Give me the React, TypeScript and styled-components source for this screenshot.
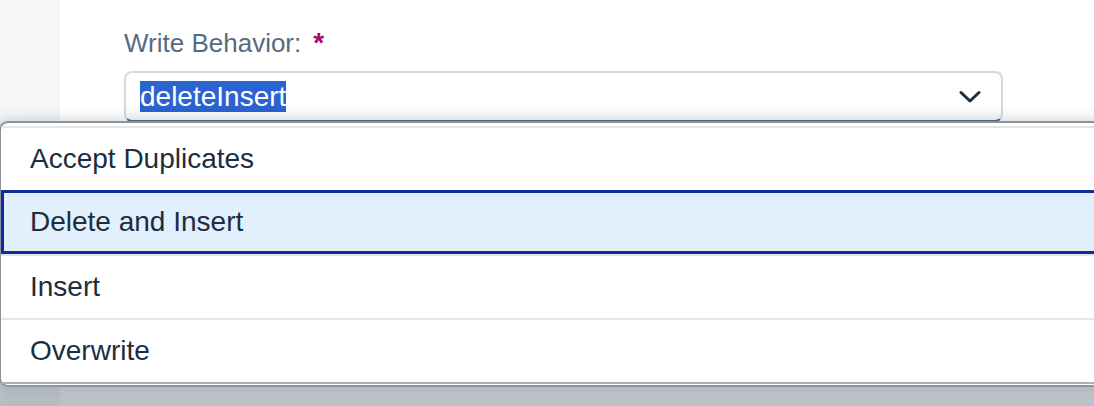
import React from "react";
import styled, { createGlobalStyle } from "styled-components";

const GlobalStyle = createGlobalStyle`
  html, body {
    margin: 0;
    padding: 0;
    width: 1094px;
    height: 406px;
    overflow: hidden;
    background: #ffffff;
    font-family: "Liberation Sans", Arial, sans-serif;
  }
`;

const Page = styled.div`
  position: relative;
  display: flex;
  width: 1094px;
  height: 406px;
  overflow: hidden;
`;

const Rail = styled.div`
  width: 60px;
  flex-shrink: 0;
  background: #f5f6f7;
`;

const Panel = styled.div`
  flex: 1;
  display: flex;
  flex-direction: column;
  gap: 12px;
  padding: 27px 0 0 64px;
  background: #ffffff;
`;

const Label = styled.label`
  display: flex;
  align-items: baseline;
  gap: 12px;
  font-size: 26px;
  line-height: 32px;
  color: #556b82;
`;

const Required = styled.span`
  color: #aa0a6a;
  font-weight: 700;
  font-size: 28px;
`;

const Input = styled.div`
  box-sizing: border-box;
  width: 879px;
  height: 51px;
  display: flex;
  align-items: center;
  justify-content: space-between;
  padding: 0 20px 0 14px;
  border: 2px solid #d3d9de;
  border-bottom-color: #556b82;
  border-radius: 8px;
  background: linear-gradient(#ffffff 60%, #f7f8f9);
`;

const Selection = styled.span`
  font-size: 28px;
  line-height: 31px;
  color: #ffffff;
  background: #2b63d0;
`;

const Chevron = styled.svg`
  width: 22px;
  height: 14px;
`;

const Popover = styled.div`
  position: absolute;
  top: 121px;
  left: -1px;
  width: 1110px;
  box-sizing: border-box;
  background: #ffffff;
  border: 2px solid #8b939c;
  border-bottom-color: #8a95a2;
  border-right: none;
  border-radius: 9px 0 0 9px;
  padding: 3px 0 1px;
  box-shadow: 0 26px 22px 18px rgba(34, 53, 72, 0.3), 0 0 14px rgba(34, 53, 72, 0.1);
`;

const List = styled.ul`
  list-style: none;
  margin: 0;
  padding: 0;
  border-bottom: 2px solid #aab0b8;
`;

const Item = styled.li<{ $selected?: boolean }>`
  box-sizing: border-box;
  display: flex;
  align-items: center;
  height: 64px;
  padding-left: 29px;
  font-size: 28px;
  color: #1d2d3e;
  border-top: 2px solid #e5e5e5;
  ${(p) =>
    p.$selected &&
    `
    padding-left: 26px;
    background: #e1f0fc;
    border: 3px solid #0f2e9e;
    border-right: none;
  `}
`;

const options = ["Accept Duplicates", "Delete and Insert", "Insert", "Overwrite"];

export default function App() {
  return (
    <Page>
      <GlobalStyle />
      <Rail />
      <Panel>
        <Label>
          Write Behavior:
          <Required>*</Required>
        </Label>
        <Input>
          <Selection>deleteInsert</Selection>
          <Chevron viewBox="0 0 22 14">
            <path
              d="M2 2.5 L11 11 L20 2.5"
              fill="none"
              stroke="#1d2d3e"
              strokeWidth="3"
              strokeLinecap="round"
              strokeLinejoin="round"
            />
          </Chevron>
        </Input>
      </Panel>
      <Popover>
        <List>
          {options.map((o) => (
            <Item key={o} $selected={o === "Delete and Insert"}>
              {o}
            </Item>
          ))}
        </List>
      </Popover>
    </Page>
  );
}
